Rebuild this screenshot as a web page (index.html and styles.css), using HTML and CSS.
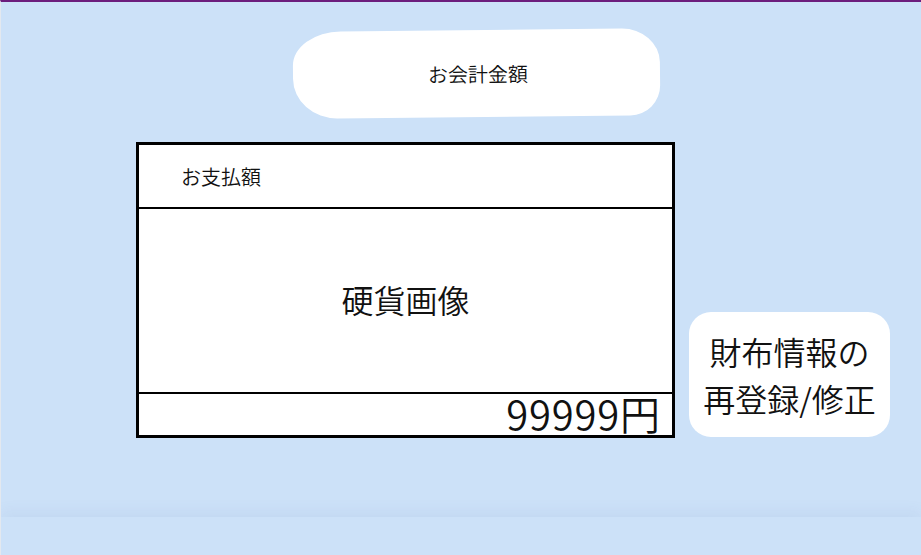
FILE: index.html
```html
<!DOCTYPE html>
<html lang="ja">
<head>
<meta charset="utf-8">
<title>お会計</title>
<link rel="stylesheet" href="styles.css">
</head>
<body>
<div class="page">
  <header class="title-wrap">
    <div class="title-blob">お会計金額</div>
  </header>
  <main class="content">
    <section class="pay-box">
      <div class="pay-head">お支払額</div>
      <div class="pay-coins">硬貨画像</div>
      <div class="pay-total"><span class="amount">99999円</span></div>
    </section>
    <button class="wallet-btn">財布情報の<br>再登録/修正</button>
  </main>
  <footer class="footer"></footer>
</div>
</body>
</html>
```

FILE: styles.css
```css
html, body {
  margin: 0;
  padding: 0;
  height: 100%;
}
body {
  background: #cce1f8;
  font-family: "Noto Sans CJK JP", "Noto Sans", sans-serif;
  font-weight: 350;
  color: #111;
}
.page {
  height: 555px;
  box-sizing: border-box;
  border-top: 2px solid #6c1d7d;
  border-left: 1px solid #e3e8ef;
  display: flex;
  flex-direction: column;
  overflow: hidden;
}
.title-wrap {
  padding-top: 28px;
  padding-left: 292px;
}
.title-blob {
  width: 367px;
  height: 87px;
  background: #fff;
  border-radius: 48px 38px 30px 44px / 34px 34px 30px 40px;
  transform: rotate(-0.6deg);
  display: flex;
  align-items: center;
  justify-content: center;
  font-size: 20px;
  padding-left: 3px;
  box-sizing: border-box;
}
.content {
  margin-top: 25px;
  padding-left: 135px;
  display: flex;
  align-items: flex-end;
  gap: 14px;
}
.pay-box {
  width: 539px;
  height: 296px;
  box-sizing: border-box;
  border: 3px solid #000;
  background: #fff;
  display: flex;
  flex-direction: column;
}
.pay-head {
  height: 62px;
  border-bottom: 2px solid #000;
  margin-right: -3px;
  display: flex;
  align-items: center;
  padding-left: 42px;
  font-size: 20px;
}
.pay-coins {
  flex: 1;
  border-bottom: 2px solid #000;
  display: flex;
  align-items: center;
  justify-content: center;
  font-size: 32px;
  padding-bottom: 4px;
}
.pay-total {
  height: 41px;
  display: flex;
  justify-content: flex-end;
  padding-right: 12px;
  box-sizing: border-box;
}
.amount {
  font-size: 40px;
  line-height: 40px;
  margin-top: -1px;
  letter-spacing: 0.8px;
  margin-right: -0.8px;
}
.wallet-btn {
  width: 201px;
  height: 125px;
  border: none;
  background: #fff;
  border-radius: 22px;
  font-family: inherit;
  font-weight: 350;
  font-size: 32px;
  line-height: 47px;
  color: #111;
  padding: 0;
  margin-bottom: 1px;
}
.footer {
  margin-top: auto;
  height: 38px;
  background: #cce1f8;
  box-shadow: 0 -6px 14px rgba(90, 120, 170, 0.07);
}
```
